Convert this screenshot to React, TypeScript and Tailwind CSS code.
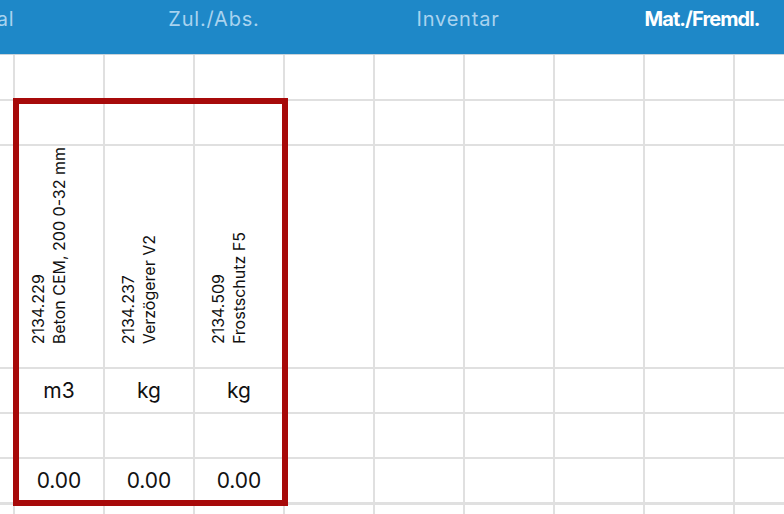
import type { ReactNode } from "react";

const COLS = 9;

const TABS = [
  { label: "Personal", active: false },
  { label: "Zul./Abs.", active: false },
  { label: "Inventar", active: false },
  { label: "Mat./Fremdl.", active: true },
];

const ITEMS = [
  { nr: "2134.229", name: "Beton CEM, 200 0-32 mm", unit: "m3", qty: "0.00" },
  { nr: "2134.237", name: "Verzögerer V2", unit: "kg", qty: "0.00" },
  { nr: "2134.509", name: "Frostschutz F5", unit: "kg", qty: "0.00" },
];

function GridRow({
  className,
  render,
}: {
  className: string;
  render?: (i: number) => ReactNode;
}) {
  return (
    <div className={`flex shrink-0 border-[#e0e0e0] ${className}`}>
      <div className="w-[13px] shrink-0" />
      {Array.from({ length: COLS }).map((_, i) => (
        <div key={i} className="h-full w-[90px] shrink-0 border-l-2 border-[#e0e0e0]">
          {render?.(i)}
        </div>
      ))}
    </div>
  );
}

function ItemHead({ nr, name }: { nr: string; name: string }) {
  return (
    <div className="flex h-full items-end pb-[23px] pl-[13px]">
      <div className="rotate-180 whitespace-nowrap text-[16px] leading-[21px] text-[#111] [writing-mode:vertical-rl]">
        <div>{nr}</div>
        <div>{name}</div>
      </div>
    </div>
  );
}

function Centered({ text }: { text: string }) {
  return (
    <div className="flex h-full items-center justify-center text-[21px] text-[#111]">{text}</div>
  );
}

export default function App() {
  return (
    <div className="relative flex h-[514px] w-[784px] flex-col overflow-hidden bg-white font-['Inter',sans-serif]">
      {/* tab bar, scrolled so the first tab is mostly off screen */}
      <div className="h-[55px] shrink-0 overflow-hidden border-b border-[#c9d3da] bg-[#1e88c8]">
        <div className="ml-[-152px] flex pt-[6px]">
          {TABS.map((t) => (
            <div
              key={t.label}
              className={`w-[244px] shrink-0 text-center text-[20px] leading-[26px] ${
                t.active
                  ? "font-bold tracking-[-0.9px] text-white"
                  : "tracking-[0.8px] text-[#a9d3ef]"
              }`}
            >
              {t.label}
            </div>
          ))}
        </div>
      </div>

      <GridRow className="h-[46px] border-b-2" />
      <GridRow className="h-[45px] border-b-2" />
      <GridRow
        className="h-[223px] border-b-2"
        render={(i) => (ITEMS[i] ? <ItemHead nr={ITEMS[i].nr} name={ITEMS[i].name} /> : null)}
      />
      <GridRow
        className="h-[45px] border-b-2"
        render={(i) => (ITEMS[i] ? <Centered text={ITEMS[i].unit} /> : null)}
      />
      <GridRow className="h-[45px] border-b-2" />
      <GridRow
        className="h-[46px] border-b-[3px]"
        render={(i) => (ITEMS[i] ? <Centered text={ITEMS[i].qty} /> : null)}
      />
      <GridRow className="h-[40px]" />

      {/* selection frame */}
      <div className="absolute left-[13px] top-[98px] h-[408px] w-[275px] border-[6px] border-[#a70a0a]" />
    </div>
  );
}
